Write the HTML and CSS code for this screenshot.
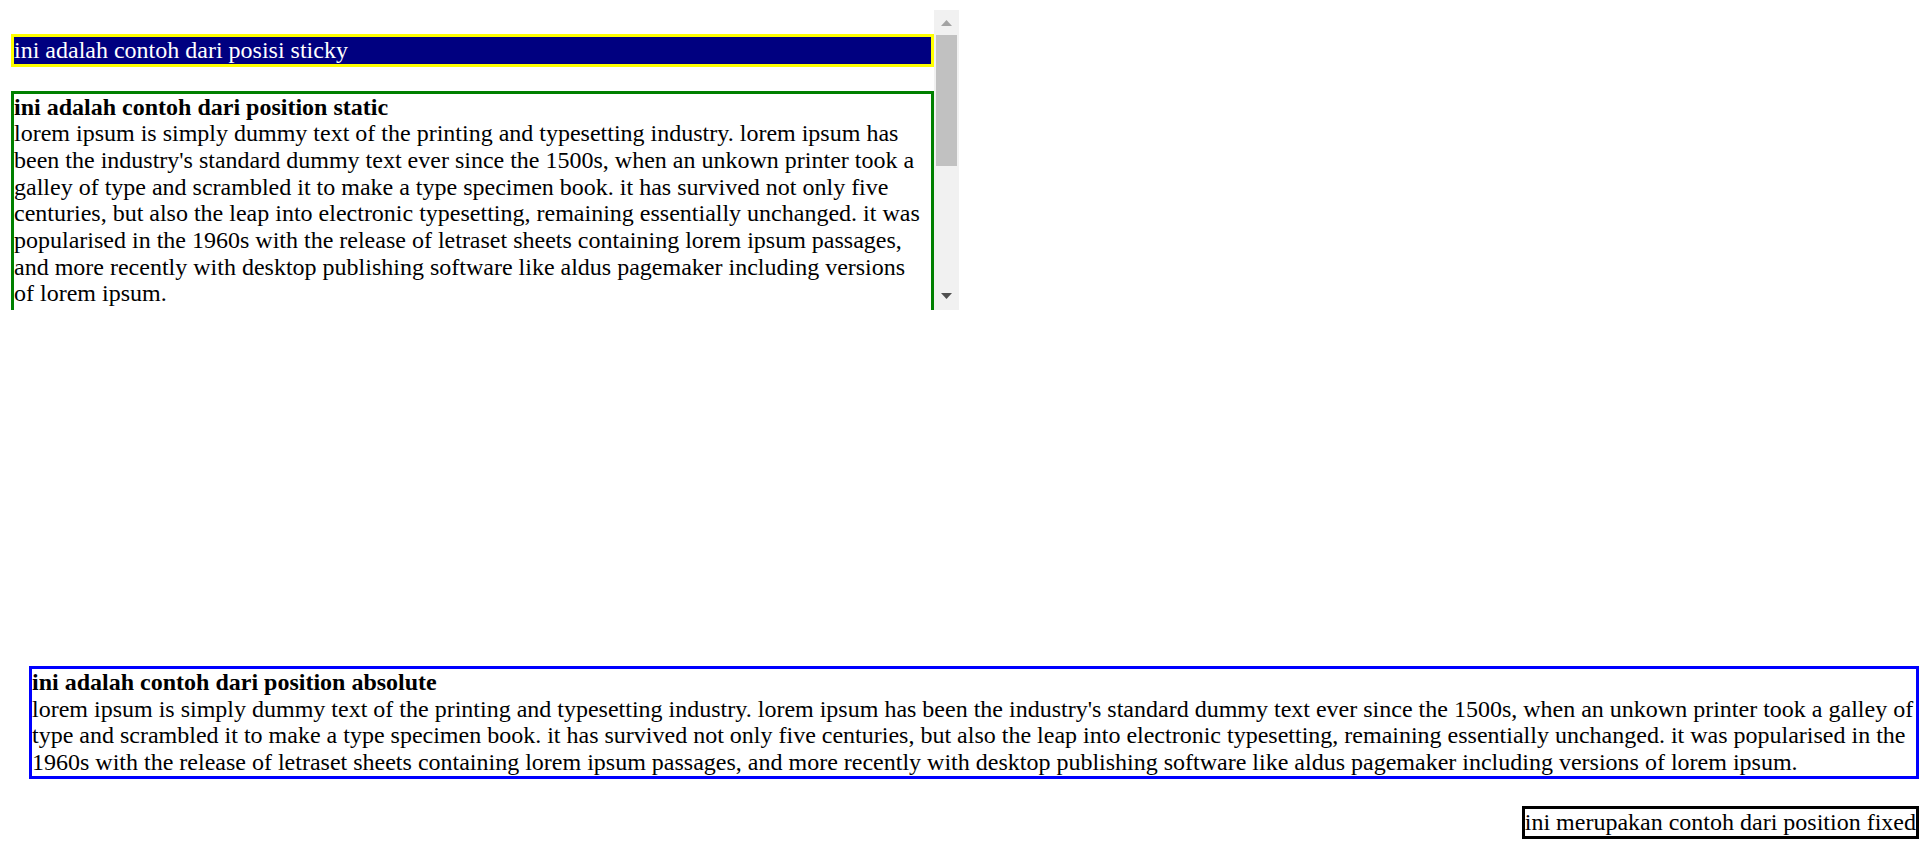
FILE: index.html
```html
<!DOCTYPE html>
<html lang="id">
<head>
<meta charset="utf-8">
<title>Contoh Position</title>
<link rel="stylesheet" href="styles.css">
</head>
<body>
<div class="page">
  <div class="scrollbox">
    <div class="viewport">
      <div class="sticky">ini adalah contoh dari posisi sticky</div>
      <div class="static"><b>ini adalah contoh dari position static</b><br>lorem ipsum is simply dummy text of the printing and typesetting industry. lorem ipsum has been the industry's standard dummy text ever since the 1500s, when an unkown printer took a galley of type and scrambled it to make a type specimen book. it has survived not only five centuries, but also the leap into electronic typesetting, remaining essentially unchanged. it was popularised in the 1960s with the release of letraset sheets containing lorem ipsum passages, and more recently with desktop publishing software like aldus pagemaker including versions of lorem ipsum.</div>
    </div>
    <div class="scrollbar">
      <div class="sb-btn sb-up"><svg width="11" height="6" viewBox="0 0 11 6"><polygon points="5.5,0 11,6 0,6" fill="#a3a3a3"/></svg></div>
      <div class="sb-track"><div class="sb-thumb"></div></div>
      <div class="sb-btn sb-down"><svg width="11" height="6" viewBox="0 0 11 6"><polygon points="0,0 11,0 5.5,6" fill="#505050"/></svg></div>
    </div>
  </div>
</div>
<div class="absolute"><b>ini adalah contoh dari position absolute</b><br>lorem ipsum is simply dummy text of the printing and typesetting industry. lorem ipsum has been the industry's standard dummy text ever since the 1500s, when an unkown printer took a galley of type and scrambled it to make a type specimen book. it has survived not only five centuries, but also the leap into electronic typesetting, remaining essentially unchanged. it was popularised in the 1960s with the release of letraset sheets containing lorem ipsum passages, and more recently with desktop publishing software like aldus pagemaker including versions of lorem ipsum.</div>
<div class="fixed">ini merupakan contoh dari position fixed</div>
</body>
</html>
```
FILE: styles.css
```css
html, body {
  margin: 0;
  padding: 0;
  background: #fff;
}
body {
  font-family: "Liberation Serif", "Times New Roman", serif;
  font-size: 24px;
  line-height: 26.67px;
  color: #000;
}
.page {
  padding: 10px 0 0 11px;
}
.scrollbox {
  display: flex;
  width: 948px;
  height: 300px;
}
.viewport {
  flex: 1;
  min-width: 0;
  overflow: hidden;
}
.scrollbar {
  width: 25px;
  flex: none;
  display: flex;
  flex-direction: column;
  background: #f1f1f1;
}
.sb-btn {
  height: 25px;
  flex: none;
  display: flex;
  justify-content: center;
  align-items: flex-start;
}
.sb-btn svg {
  display: block;
}
.sb-up {
  padding-top: 10px;
  box-sizing: border-box;
}
.sb-down {
  padding-top: 8px;
  box-sizing: border-box;
}
.sb-track {
  flex: 1;
  padding: 0 2px;
}
.sb-thumb {
  height: 131px;
  background: #c1c1c1;
}
.sticky {
  position: sticky;
  top: 0;
  margin: 24px 0;
  border: 3px solid #ffff00;
  background: #000080;
  color: #fff;
}
.static {
  border: 3px solid #008000;
  padding-bottom: 40px;
}
.absolute {
  position: absolute;
  left: 29px;
  right: 0;
  top: 666px;
  border: 3px solid #0000ff;
}
.fixed {
  position: fixed;
  right: 0;
  bottom: 22px;
  border: 3px solid #000;
  background: #fff;
}
```
